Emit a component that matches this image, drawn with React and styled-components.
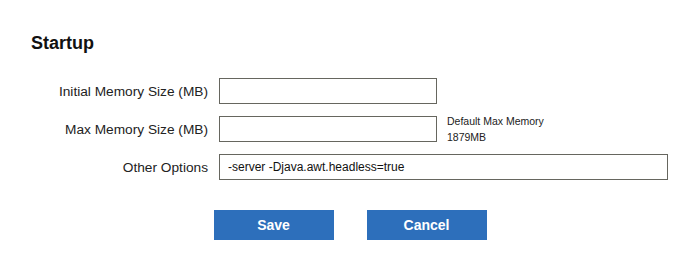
import React from "react";
import styled, { createGlobalStyle } from "styled-components";

const GlobalStyle = createGlobalStyle`
  body {
    margin: 0;
    background: #ffffff;
    font-family: "Liberation Sans", Arial, sans-serif;
  }
`;

const Page = styled.div`
  padding: 33px 0 0 0;
  width: 700px;
  height: 269px;
  box-sizing: border-box;
`;

const Title = styled.h2`
  margin: 0 0 24px 31px;
  font-size: 18px;
  line-height: 21px;
  font-weight: bold;
  color: #111111;
`;

const Form = styled.div`
  display: grid;
  grid-template-columns: 208px 1fr;
  column-gap: 11px;
  row-gap: 12px;
  align-items: center;
`;

const Label = styled.label`
  text-align: right;
  font-size: 13.7px;
  color: #222222;
`;

const Field = styled.div`
  display: flex;
  align-items: flex-start;
  gap: 10px;
  height: 26px;
`;

const Input = styled.input`
  box-sizing: border-box;
  width: ${(props) => props.$width}px;
  height: 26px;
  margin: 0;
  padding: 0 8px;
  border: 1px solid #66665f;
  border-radius: 0;
  font-family: "Liberation Sans", Arial, sans-serif;
  font-size: 12px;
  color: #111111;
  outline: none;
`;

const Note = styled.div`
  margin-top: -3px;
  font-size: 10.5px;
  line-height: 16px;
  color: #222222;
  white-space: nowrap;
`;

const Actions = styled.div`
  display: flex;
  justify-content: center;
  gap: 33px;
  margin-top: 30px;
`;

const Button = styled.button`
  width: 120px;
  height: 30px;
  border: none;
  border-radius: 0;
  background: #2d6fbb;
  color: #ffffff;
  font-family: "Liberation Sans", Arial, sans-serif;
  font-size: 14px;
  font-weight: bold;
  cursor: pointer;
`;

const App = () => {
  return (
    <>
      <GlobalStyle />
      <Page>
        <Title>Startup</Title>
        <Form>
          <Label>Initial Memory Size (MB)</Label>
          <Field>
            <Input $width={218} />
          </Field>
          <Label>Max Memory Size (MB)</Label>
          <Field>
            <Input $width={218} />
            <Note>
              Default Max Memory
              <br />
              1879MB
            </Note>
          </Field>
          <Label>Other Options</Label>
          <Field>
            <Input $width={449} defaultValue="-server -Djava.awt.headless=true" />
          </Field>
        </Form>
        <Actions>
          <Button>Save</Button>
          <Button>Cancel</Button>
        </Actions>
      </Page>
    </>
  );
};

export default App;
